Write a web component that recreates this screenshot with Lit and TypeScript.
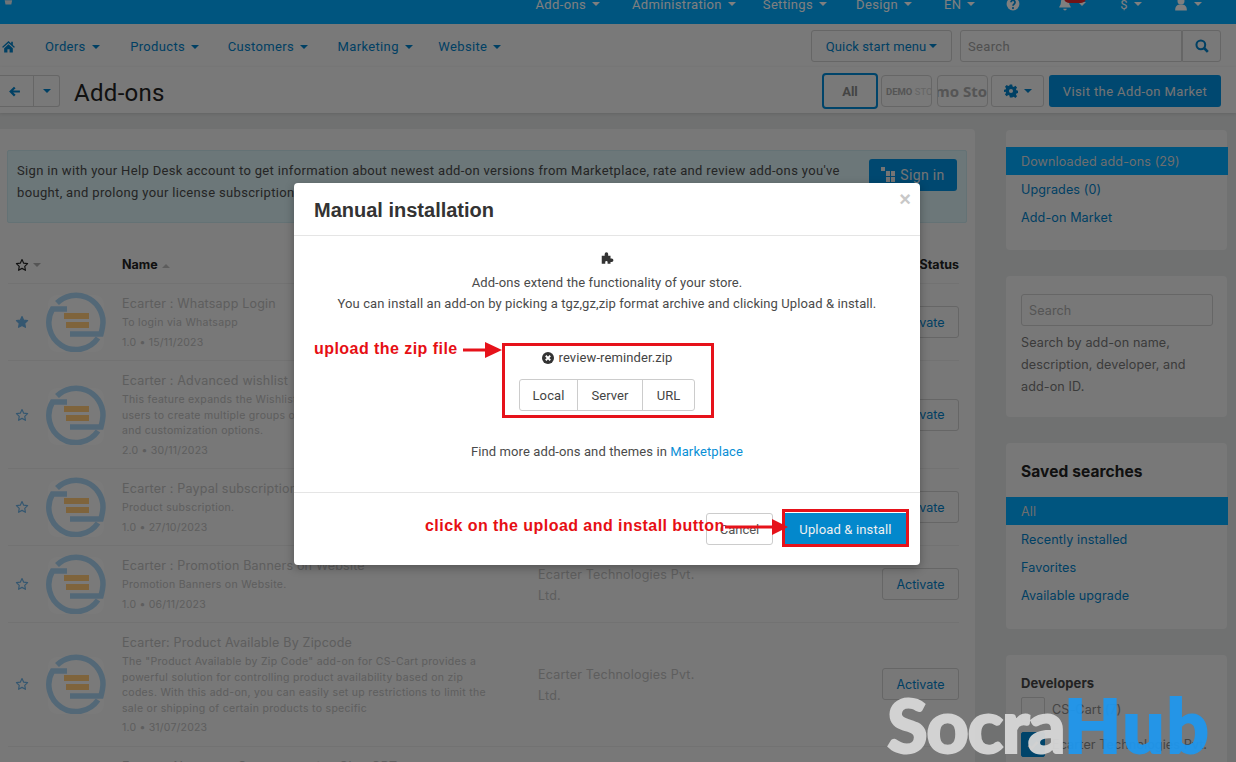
import { LitElement, html, css, svg } from "lit";
import { customElement } from "lit/decorators.js";

const star = (filled: boolean) => html`<svg class="star" viewBox="0 0 24 24"><path d="M12 2.6l2.9 6.2 6.7.9-4.9 4.7 1.2 6.7-5.9-3.3-5.9 3.3 1.2-6.7L2.4 9.7l6.7-.9z" fill=${filled ? "currentColor" : "none"} stroke="currentColor" stroke-width="2" stroke-linejoin="round"/></svg>`;

const logo = html`<svg class="logo" viewBox="0 0 60 60" fill="none">
  <rect x="2" y="3" width="56" height="57" rx="9" fill="#fff" opacity=".3"/>
  <path d="M11 11A27 27 0 0 1 57 30C57 34 56 38 55 42H24" stroke="#a6d0ee" stroke-width="5.5"/>
  <path d="M21 17H6.5A27 27 0 0 0 52 46" stroke="#a6d0ee" stroke-width="5.5"/>
  <path d="M18 21h25v6H18zM20 30h23v6H20z" fill="#ffc878"/>
</svg>`;

const caret = html`<i class="caret"></i>`;

type Row = { fav?: boolean; title: string; desc: string[]; ver: string };
const rows: Row[] = [
  { fav: true, title: "Ecarter : Whatsapp Login", desc: ["To login via Whatsapp"], ver: "1.0 • 15/11/2023" },
  { title: "Ecarter : Advanced wishlist", desc: ["This feature expands the Wishlist functionality, allowing", "users to create multiple groups of products with sharing", "and customization options."], ver: "2.0 • 30/11/2023" },
  { title: "Ecarter : Paypal subscription", desc: ["Product subscription."], ver: "1.0 • 27/10/2023" },
  { title: "Ecarter : Promotion Banners on Website", desc: ["Promotion Banners on Website."], ver: "1.0 • 06/11/2023" },
  { title: "Ecarter: Product Available By Zipcode", desc: ['The "Product Available by Zip Code" add-on for CS-Cart provides a', "powerful solution for controlling product availability based on zip", "codes. With this add-on, you can easily set up restrictions to limit the", "sale or shipping of certain products to specific"], ver: "1.0 • 31/07/2023" },
  { title: "Ecarter: Newsmap Generator using Chat GPT", desc: ["Generate a newsmap for your store", "", "", "", ""], ver: "" },
];

const topItems: [string, number][] = [["Add-ons", 32], ["Administration", 27], ["Settings", 29], ["Design", 32], ["EN", 31]];
const navItems: [string, number][] = [["Orders", 30.5], ["Products", 28.5], ["Customers", 29.5], ["Marketing", 25.5], ["Website", 0]];

@customElement("app-root")
export class AppRoot extends LitElement {
  static styles = css`
    :host { display: block; width: 1236px; height: 762px; overflow: hidden; position: relative; background: #e0e2e2; font-family: Roboto, "Liberation Sans", sans-serif; font-size: 13px; color: #333; }
    * { box-sizing: border-box; }
    svg { display: block; }
    .caret { display: inline-block; width: 0; height: 0; border: 4px solid transparent; border-top-color: currentColor; border-bottom: 0; margin-left: 6px; vertical-align: middle; }

    .top { height: 24px; background: #00aaff; color: #fff; display: flex; align-items: flex-end; padding: 0 34px 0 3px; letter-spacing: .35px; }
    .top .cart { width: 10px; height: 9px; align-self: flex-start; color: #dfe9f0; }
    .top .items { margin-left: auto; display: flex; align-items: flex-end; height: 24px; }
    .top .it { display: flex; align-items: center; height: 16px; margin-bottom: 12px; white-space: nowrap; position: relative; }
    .top .it .caret { margin-left: 6px; }
    .top svg { width: 14px; height: 14px; }
    .badge { position: absolute; left: 6px; top: -3px; width: 22px; height: 10px; border-radius: 5px; background: #e0282c; }

    .nav { height: 43px; background: #f2f2f2; display: flex; align-items: center; padding: 1px 15px 0 2px; color: #0080c8; letter-spacing: .35px; }
    .nav .home { width: 13px; height: 13px; margin-right: 30px; }
    .nav .links { display: flex; flex: 1; }
    .nav .caret { margin-left: 6px; }
    .qs { height: 32px; width: 141px; border: 1px solid #ccc; border-radius: 3px; display: flex; align-items: center; justify-content: center; margin-right: 8px; background: #f2f2f2; letter-spacing: .1px; }
    .searchbox { display: flex; width: 261px; height: 32px; }
    .searchbox div { border: 1px solid #ccc; display: flex; align-items: center; }
    .searchbox .in { flex: 1; padding-left: 7px; color: #a0a0a0; border-radius: 3px 0 0 3px; background: #f4f4f4; }
    .searchbox .btn { width: 39px; justify-content: center; border-left: 1px solid #ccc; border-radius: 0 3px 3px 0; color: #0080c8; }
    .searchbox svg { width: 14px; height: 14px; }

    .title { height: 46px; background: #f2f2f2; display: flex; align-items: center; padding: 2px 15px 0 0; box-shadow: 0 1px 3px rgba(0,0,0,.12); position: relative; }
    .bk { height: 32px; border: 1px solid #ccc; display: flex; align-items: center; justify-content: center; color: #0080c8; background: #f2f2f2; }
    .bk.a { width: 35px; margin-left: -1px; padding-right: 4px; }
    .bk.b { width: 26px; border-left: 0; border-radius: 0 3px 3px 0; }
    .bk.b .caret { margin: 0; }
    .bk svg { width: 13px; height: 13px; }
    h1 { font: 400 24px Roboto, sans-serif; margin: 3px 0 0 14px; flex: 1; color: #222; letter-spacing: .3px; }
    .allb { width: 56px; height: 36px; border: 2px solid #0088d4; border-radius: 4px; display: flex; align-items: center; justify-content: center; font-weight: 700; color: #888; margin-right: 3px; }
    .vend { width: 51px; height: 32px; border: 1px solid #ccc; border-radius: 4px; overflow: hidden; display: flex; align-items: center; white-space: nowrap; color: #aaa; font-weight: 700; margin-right: 5px; }
    .vend.d { font-size: 9.5px; padding-left: 4px; }
    .vend.d span { color: #ccc; font-weight: 400; }
    .vend.m { font-size: 15px; justify-content: flex-end; font-family: "Open Sans", sans-serif; margin-right: 3px; }
    .gear { width: 53px; height: 32px; border: 1px solid #ccc; border-radius: 3px; display: flex; align-items: center; justify-content: center; color: #0080c8; margin-right: 5px; }
    .gear svg { width: 14px; height: 14px; }
    .blue { background: #0090e0; color: #e8e8e8; border-radius: 3px; display: flex; align-items: center; justify-content: center; }
    .visit { width: 172px; height: 32px; letter-spacing: .4px; }

    .body { display: grid; grid-template-columns: 975px 221px; gap: 31px; padding-top: 16px; }
    .main { background: #f0f0f0; border-radius: 0 4px 0 0; height: 640px; padding: 21px 8px 0 7px; }
    .alert { height: 73px; background: #d8eef2; border: 1px solid #c8e4ea; border-radius: 2px; padding: 8px 9px 8px 9px; display: flex; justify-content: space-between; line-height: 22px; color: #4a4a4a; letter-spacing: .34px; }
    .alert p { margin: 1px 0 0; white-space: nowrap; }
    .signin { width: 88px; height: 32px; gap: 5px; font-size: 14px; flex: none; }
    .signin svg { width: 14px; height: 16px; }

    .thead { height: 61px; display: grid; grid-template-columns: 107px 1fr auto; align-items: flex-end; padding: 0 0 11px 7px; font-weight: 700; color: #222; font-family: Inter, sans-serif; border-bottom: 1px solid #e4e4e4; margin-left: 1px; width: 951px; font-size: 12.5px; }
    .thead .s { display: flex; align-items: center; color: #222; }
    .thead .s i { color: #aaa; }
    .thead .up { display: inline-block; border: 4px solid transparent; border-bottom-color: #bbb; border-top: 0; margin-left: 4px; vertical-align: middle; }
    .star { width: 14px; height: 14px; }
    .row { display: grid; grid-template-columns: 31px 76px 416px 344px 77px; align-items: center; border-bottom: 1px solid #e4e4e4; padding: 0 0 0 7px; margin-left: 1px; width: 951px; font-family: Inter, sans-serif; color: #bcbcbc; }
    .row .star { color: #6aaee0; }
    .row .logo { width: 60px; height: 60px; }
    .info { padding: 10px 0 8.5px; white-space: nowrap; }
    .info .t { font-size: 12.5px; line-height: 20px; letter-spacing: .2px; }
    .info .d { font-size: 10.5px; line-height: 15.5px; letter-spacing: .3px; margin-top: 1px; }
    .info .d div { height: 15.5px; }
    .info .v { font-size: 10.5px; line-height: 19px; margin-top: 2px; letter-spacing: .2px; }
    .dev { line-height: 21px; font-size: 12.5px; letter-spacing: .2px; width: 170px; padding-top: 2px; }
    .act { height: 32px; width: 77px; border: 1px solid #ccc; border-radius: 3px; display: flex; align-items: center; justify-content: center; color: #0080c8; font-size: 12.5px; }

    .side { display: flex; flex-direction: column; gap: 26px; font-family: Inter, sans-serif; font-size: 12.6px; letter-spacing: .1px; padding-top: 1px; }
    .p { background: #f0f0f0; border-radius: 4px; }
    .p1 { height: 120px; padding-top: 17px; }
    .p2 { height: 141px; padding: 18px 14px 0 15px; color: #777; }
    .p3 { height: 186px; padding-top: 19px; }
    .p4 { height: 200px; padding: 20px 15px; }
    .li { height: 28px; padding-left: 15px; display: flex; align-items: center; color: #0080c8; width: 222px; }
    .li.on { background: #00aaff; color: #ddd; }
    .sin { height: 32px; border: 1px solid #ccc; border-radius: 3px; padding-left: 7px; display: flex; align-items: center; color: #aaa; margin-bottom: 6px; }
    .p2 p { margin: 0; line-height: 22px; }
    .p3 h3 { font-size: 15.5px; font-weight: 700; color: #222; margin: 0 0 15px 15px; line-height: 20px; }
    .p4 h4 { margin: 0 0 5px; font-size: 13px; line-height: 17px; font-weight: 700; color: #444; }
    .chk { display: flex; align-items: center; gap: 7px; height: 25px; margin-bottom: 10px; color: #888; white-space: nowrap; }
    .chk i { width: 24px; height: 25px; border: 1px solid #ccc; border-radius: 2px; flex: none; display: flex; align-items: center; justify-content: center; }
    .chk i.c { background: #0088d4; border-color: #0088d4; color: #ddd; }
    .chk svg { width: 12px; height: 12px; }

    .overlay { position: absolute; inset: 0; background: rgba(0,0,0,.5); }

    .modal { position: absolute; left: 294px; top: 183px; width: 626px; height: 382px; background: #fff; border-radius: 4px; box-shadow: 0 3px 10px rgba(0,0,0,.3); display: flex; flex-direction: column; color: #4a4a4a; }
    .mh { height: 53px; border-bottom: 1px solid #e5e5e5; padding: 0 20px; display: flex; align-items: center; justify-content: space-between; }
    .mh h2 { margin: 2px 0 0; font: 700 20px "Liberation Sans", Arial, sans-serif; color: #333; }
    .mh .x { align-self: flex-start; margin: 8px -11px 0 0; font: 700 20px "Liberation Sans", sans-serif; color: #c8c8c8; line-height: 16px; }
    .mb { flex: 1; padding-top: 15px; display: flex; flex-direction: column; align-items: center; letter-spacing: .1px; position: relative; }
    .mb .pz { width: 14px; height: 14px; color: #333; margin-bottom: 7px; }
    .mb p { margin: 0; line-height: 21px; }
    .file { margin-top: 35px; display: flex; align-items: center; gap: 5px; line-height: 18px; height: 18px; color: #444; }
    .file svg { width: 12px; height: 12px; color: #333; }
    .grp { display: flex; height: 32px; margin-top: 12px; border: 1px solid #ccc; border-radius: 3px; color: #444; }
    .grp span { display: flex; align-items: center; justify-content: center; border-right: 1px solid #ccc; }
    .grp span:last-child { border: 0; }
    .find { margin-top: 30px !important; }
    .find a { color: #0a8fd6; }
    .mf { height: 73px; border-top: 1px solid #e5e5e5; display: flex; align-items: center; justify-content: flex-end; padding: 0 14px 0 0; gap: 12px; }
    .cancel { width: 67px; height: 32px; border: 1px solid #ccc; border-radius: 3px; display: flex; align-items: center; justify-content: center; color: #555; }
    .upl { width: 121px; height: 32px; background: #0388cc; color: #f0f0f0; display: flex; align-items: center; justify-content: center; letter-spacing: .15px; }

    .note { position: absolute; font: 700 16px "Liberation Sans", Arial, sans-serif; color: #e60f14; white-space: nowrap; letter-spacing: .45px; line-height: 18px; }
    .rbox { position: absolute; border: 3px solid #e6121a; }
    .arrow { position: absolute; }

    .wm { position: absolute; left: 887px; top: 675px; font: 900 74px/100px Lato, "Open Sans", sans-serif; white-space: nowrap; color: #d8d8d8; -webkit-text-stroke: 2px #d8d8d8; paint-order: stroke; letter-spacing: -1.5px; opacity: .94; }
    .wm b { color: #1f97ee; font-weight: 900; -webkit-text-stroke: 2px #1f97ee; letter-spacing: 2px; }
  `;

  render() {
    return html`
      <div class="top">
        <svg class="cart" viewBox="0 0 12 10"><path d="M0 0h2l1 5h7l1-5H0z" fill="currentColor"/></svg>
        <div class="items">
          ${topItems.map(([t, m]) => html`<div class="it" style="margin-right:${m}px">${t}${caret}</div>`)}
          <div class="it" style="margin-right:38px"><svg viewBox="0 0 24 24"><circle cx="12" cy="12" r="11" fill="currentColor"/><path d="M8.5 9a3.5 3.5 0 1 1 5.5 3c-1.3.9-2 1.5-2 3" stroke="#0090e0" stroke-width="3" fill="none"/><circle cx="12" cy="19" r="1.8" fill="#0090e0"/></svg></div>
          <div class="it" style="margin-right:34px"><svg viewBox="0 0 24 24"><path d="M12 1c-5 0-7 4-7 8 0 5-3 7-3 9h20c0-2-3-4-3-9 0-4-2-8-7-8zM9 20a3 3 0 0 0 6 0z" fill="currentColor"/></svg><span class="badge"></span>${caret}</div>
          <div class="it" style="margin-right:32px">$${caret}</div>
          <div class="it"><svg viewBox="0 0 24 24"><circle cx="12" cy="7" r="6" fill="currentColor"/><path d="M2 23c0-8 4-10 10-10s10 2 10 10z" fill="currentColor"/></svg>${caret}</div>
        </div>
      </div>
      <div class="nav">
        <svg class="home" viewBox="0 0 24 24"><path d="M12 2l5 4.5V3h3v6.2L24 13l-2 1.5-10-9-10 9L0 13zM4 15l8-7 8 7v8h-6v-6h-4v6H4z" fill="currentColor"/></svg>
        <div class="links">${navItems.map(([t, m]) => html`<span style="margin-right:${m}px">${t}${caret}</span>`)}</div>
        <div class="qs">Quick start menu<i class="caret" style="margin-left:3px"></i></div>
        <div class="searchbox"><div class="in">Search</div><div class="btn"><svg viewBox="0 0 24 24" fill="none" stroke="currentColor"><circle cx="10" cy="10" r="7.5" stroke-width="3.5"/><path d="M15.5 15.5L22 22" stroke-width="4.5"/></svg></div></div>
      </div>
      <div class="title">
        <div class="bk a"><svg viewBox="0 0 24 24"><path d="M11 3l3 3-4.5 4H22v4H9.5l4.5 4-3 3-9-9z" fill="currentColor"/></svg></div>
        <div class="bk b">${caret}</div>
        <h1>Add-ons</h1>
        <div class="allb">All</div>
        <div class="vend d">DEMO&nbsp;<span>STORE</span></div>
        <div class="vend m">mo Sto</div>
        <div class="gear"><svg viewBox="0 0 24 24"><path d="M10 1h4l.7 3.2 2 .8 2.8-1.8 2.8 2.8-1.8 2.8.8 2 3.2.7v4l-3.2.7-.8 2 1.8 2.8-2.8 2.8-2.8-1.8-2 .8L14 23h-4l-.7-3.2-2-.8-2.8 1.8-2.8-2.8 1.8-2.8-.8-2L-.5 14v-4l3.2-.7.8-2L1.7 4.5l2.8-2.8 2.8 1.8 2-.8zM12 8.5a3.5 3.5 0 1 0 0 7 3.5 3.5 0 0 0 0-7z" fill="currentColor" fill-rule="evenodd"/></svg>${caret}</div>
        <div class="blue visit">Visit the Add-on Market</div>
      </div>
      <div class="body">
        <div class="main">
          <div class="alert">
            <p>Sign in with your Help Desk account to get information about newest add-on versions from Marketplace, rate and review add-ons you've<br>bought, and prolong your license subscriptions right from this page.</p>
            <div class="blue signin"><svg viewBox="0 0 14 16"><path d="M0 0h4v4H0zM5 4h4v5H5zM10 4h4v5h-4zM5 10h4v5H5zM10 10h4v5h-4z" fill="currentColor"/></svg>Sign in</div>
          </div>
          <div class="thead">
            <span class="s">${star(false)}<i class="caret" style="margin-left:4px"></i></span>
            <span>Name<i class="up"></i></span>
            <span>Status</span>
          </div>
          ${rows.map((r) => html`
            <div class="row">
              ${star(!!r.fav)}
              ${logo}
              <div class="info">
                <div class="t">${r.title}</div>
                <div class="d">${r.desc.map((d) => html`<div>${d}</div>`)}</div>
                <div class="v">${r.ver}</div>
              </div>
              <div class="dev">Ecarter Technologies Pvt.<br>Ltd.</div>
              <div class="act">Activate</div>
            </div>`)}
        </div>
        <div class="side">
          <div class="p p1">
            <div class="li on">Downloaded add-ons (29)</div>
            <div class="li">Upgrades (0)</div>
            <div class="li">Add-on Market</div>
          </div>
          <div class="p p2">
            <div class="sin">Search</div>
            <p>Search by add-on name,<br>description, developer, and<br>add-on ID.</p>
          </div>
          <div class="p p3">
            <h3>Saved searches</h3>
            <div class="li on">All</div>
            <div class="li">Recently installed</div>
            <div class="li">Favorites</div>
            <div class="li">Available upgrade</div>
          </div>
          <div class="p p4">
            <h4>Developers</h4>
            <div class="chk"><i></i>CS-Cart (7)</div>
            <div class="chk"><i class="c"><svg viewBox="0 0 24 24"><path d="M3 13l6 6L21 6" fill="none" stroke="currentColor" stroke-width="5"/></svg></i>Ecarter Technologies Pvt.</div>
          </div>
        </div>
      </div>

      <div class="overlay"></div>

      <div class="modal">
        <div class="mh"><h2>Manual installation</h2><span class="x">×</span></div>
        <div class="mb">
          <svg class="pz" viewBox="0 0 24 24"><path d="M3 8h5V5a3 3 0 0 1 6 0v3h4v5h2a3 3 0 0 1 0 6h-2v3h-5v-3a2 2 0 0 0-4 0v3H3z" fill="currentColor"/></svg>
          <p>Add-ons extend the functionality of your store.</p>
          <p>You can install an add-on by picking a tgz,gz,zip format archive and clicking Upload &amp; install.</p>
          <div class="file"><svg viewBox="0 0 24 24"><circle cx="12" cy="12" r="12" fill="currentColor"/><path d="M7.5 7.5l9 9M16.5 7.5l-9 9" stroke="#fff" stroke-width="3.6"/></svg>review-reminder.zip</div>
          <div class="grp">
            <span style="width:58px">Local</span><span style="width:65px">Server</span><span style="width:51px">URL</span>
          </div>
          <p class="find">Find more add-ons and themes in <a>Marketplace</a></p>
        </div>
        <div class="mf"><div class="cancel">Cancel</div><div class="upl">Upload &amp; install</div></div>
      </div>

      <div class="note" style="left:314px;top:340px">upload the zip file</div>
      <svg class="arrow" style="left:463px;top:341px" width="40" height="18" viewBox="0 0 40 18">${svg`<path d="M0 7.5h22V1l17 8-17 8v-6.500H0z" fill="#e6121a"/>`}</svg>
      <div class="rbox" style="left:502px;top:343px;width:212px;height:75px"></div>

      <div class="note" style="left:425px;top:517px">click on the upload and install button</div>
      <div class="rbox" style="left:782px;top:509px;width:127px;height:38px"></div>
      <svg class="arrow" style="left:725px;top:518px" width="64" height="18" viewBox="0 0 64 18">${svg`<path d="M0 7.500h47V1l16 8-16 8v-6.500H0z" fill="#e6121a"/>`}</svg>

      <div class="wm">Socra<b>Hub</b></div>
    `;
  }
}
